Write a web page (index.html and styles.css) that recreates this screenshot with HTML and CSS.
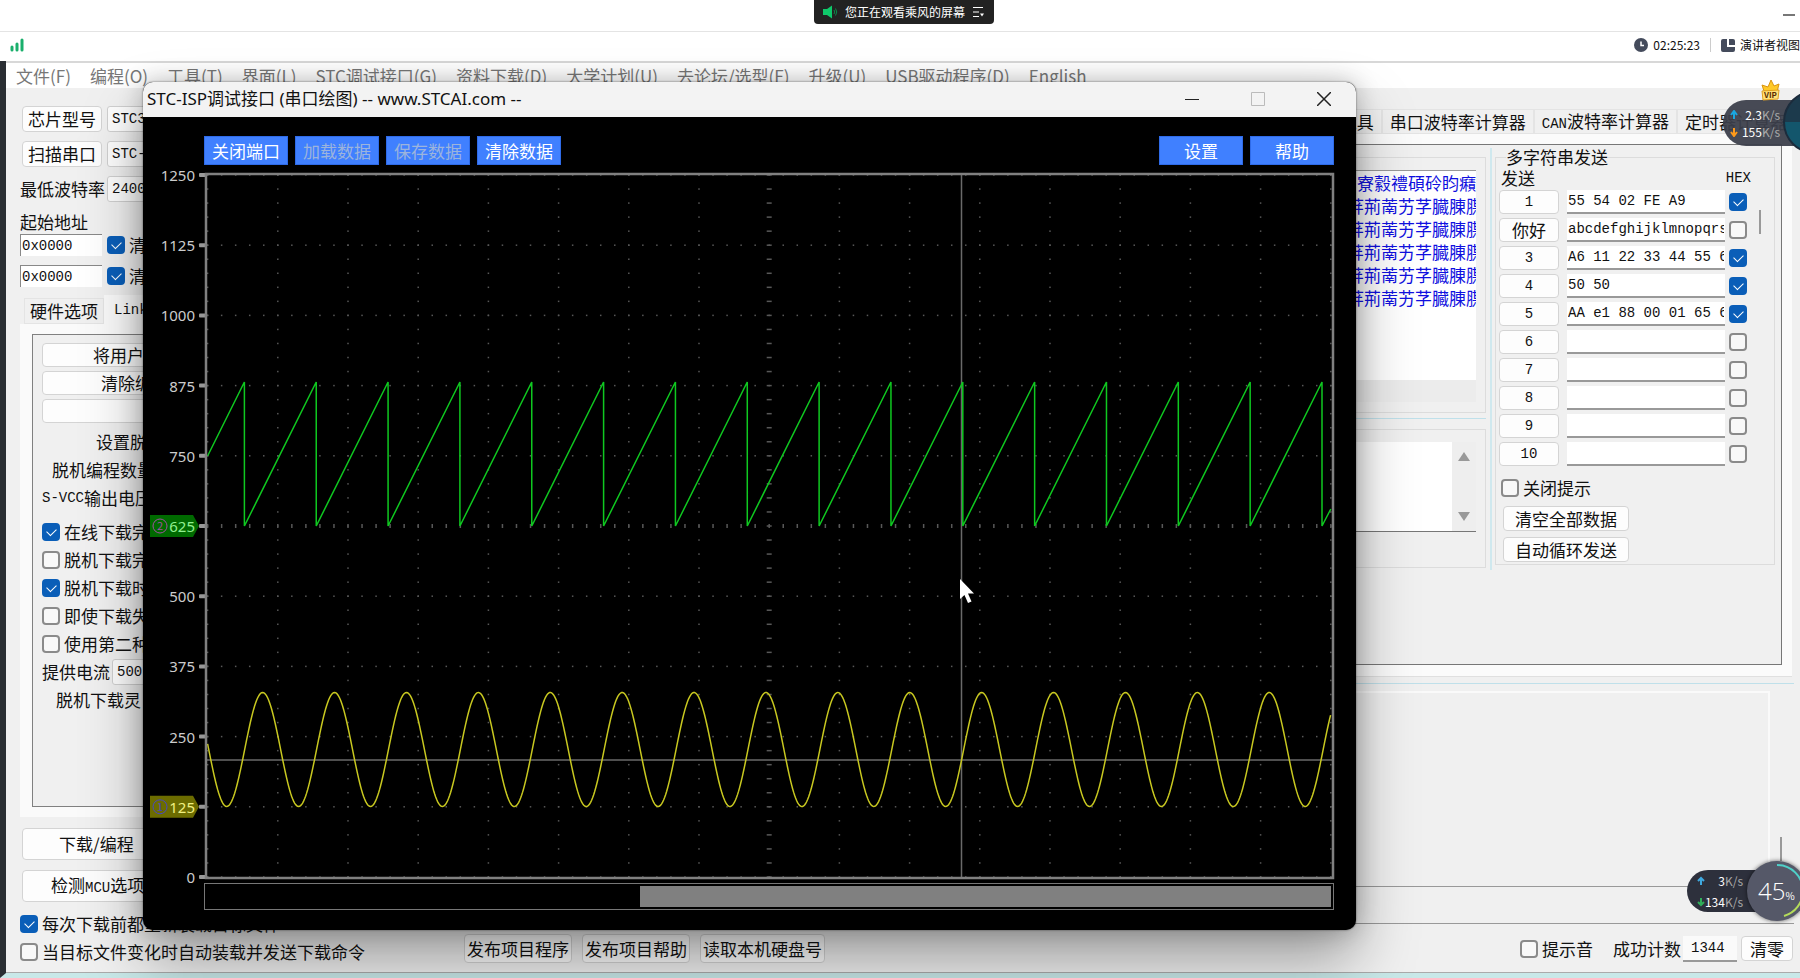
FILE: index.html
```
<!DOCTYPE html>
<html lang="zh-CN">

<head>
    <meta charset="utf-8">
    <title>STC-ISP</title>
    <link rel="stylesheet" href="styles.css">
</head>

<body>
    <header class="share-bar">
        <div class="share-pill">
            <svg width="16" height="14" viewBox="0 0 16 14">
                <path d="M1 4h4l5-3.500v13L5 10H1z" fill="#0fc86a" />
                <path d="M12 5q1.500 2 0 4M13.500 3.500q2.500 3.500 0 7" fill="none" stroke="#0a8a4a" />
            </svg>
            <span>您正在观看乘风的屏幕</span>
            <svg width="12" height="12" viewBox="0 0 12 12">
                <path d="M1 1.500h10M1 6h6M1 10.500h6" stroke="#fff" fill="none" />
                <path d="M8 7.500h4l-2 3z" fill="#fff" />
            </svg>
        </div>
        <button class="minimize" aria-label="最小化"></button>
    </header>

    <div class="meeting-bar">
        <svg width="14" height="14" viewBox="0 0 14 14">
            <path d="M2 9v3M7 6v6M12 2v10" stroke="#1aaf6c" stroke-width="3" stroke-linecap="round" />
        </svg>
        <div class="meeting-info">
            <svg width="14" height="14" viewBox="0 0 14 14">
                <circle cx="7" cy="7" r="7" fill="#444b5c" />
                <path d="M7 3.500V7.500H10" stroke="#fff" stroke-width="1.500" fill="none" />
            </svg>
            <span class="clock">02:25:23</span>
            <span class="divider"></span>
            <svg width="14" height="13" viewBox="0 0 14 13">
                <path d="M2 0h4v8h8v3a2 2 0 0 1-2 2H2a2 2 0 0 1-2-2V2a2 2 0 0 1 2-2z" fill="#444b5c" />
                <path d="M8 0h4a2 2 0 0 1 2 2v4H8z" fill="#444b5c" />
            </svg>
            <span>演讲者视图</span>
        </div>
    </div>

    <div class="stage">
        <nav class="menu">
            <a href="#">文件(F)</a>
            <a href="#">编程(O)</a>
            <a href="#">工具(T)</a>
            <a href="#">界面(L)</a>
            <a href="#">STC调试接口(G)</a>
            <a href="#">资料下载(D)</a>
            <a href="#">大学计划(U)</a>
            <a href="#">去论坛/选型(F)</a>
            <a href="#">升级(U)</a>
            <a href="#">USB驱动程序(D)</a>
            <a href="#">English</a>
        </nav>

        <div class="main">
            <section class="left">
                <div class="chip-row">
                    <button class="btn">芯片型号</button>
                    <select class="mono" aria-label="芯片型号"><option>STC32G</option></select>
                </div>
                <div class="chip-row">
                    <button class="btn">扫描串口</button>
                    <select class="mono" aria-label="扫描串口"><option>STC-USB</option></select>
                </div>
                <div class="chip-row">
                    <label for="baud">最低波特率</label>
                    <select class="mono" id="baud"><option>2400</option></select>
                </div>
                <div class="addr-title">起始地址</div>
                <div class="addr-row">
                    <input type="text" class="mono" value="0x0000" aria-label="起始地址 1">
                    <label><input type="checkbox" checked>清除</label>
                </div>
                <div class="addr-row">
                    <input type="text" class="mono" value="0x0000" aria-label="起始地址 2">
                    <label><input type="checkbox" checked>清除</label>
                </div>

                <div class="tabs left-tabs">
                    <button class="tab">硬件选项</button>
                    <button class="tab active mono">Link</button>
                </div>
                <div class="left-pane">
                    <div class="options">
                        <button class="btn wide to-user">将用户</button>
                        <button class="btn wide to-clear">清除编</button>
                        <button class="btn wide" aria-label="选项"></button>
                        <div class="opt in-54">设置脱</div>
                        <div class="opt in-10">脱机编程数量</div>
                        <div class="opt"><span class="mono">S-VCC</span>输出电压</div>
                        <div class="checks">
                            <label class="opt"><input type="checkbox" checked>在线下载完</label>
                            <label class="opt"><input type="checkbox">脱机下载完</label>
                            <label class="opt"><input type="checkbox" checked>脱机下载时</label>
                            <label class="opt"><input type="checkbox">即使下载失</label>
                            <label class="opt"><input type="checkbox">使用第二种</label>
                        </div>
                        <div class="opt">
                            <label for="current">提供电流</label>
                            <select class="mono" id="current"><option>500</option></select>
                        </div>
                        <div class="opt in-14">脱机下载灵</div>
                    </div>
                </div>

                <button class="btn big to-prog">下载/编程</button>
                <button class="btn big to-check">检测<span class="mono">MCU</span>选项</button>
                <label class="reload"><input type="checkbox" checked>每次下载前都重新装载目标文件</label>
            </section>

            <section class="right">
                <div class="tabs right-tabs">
                    <button class="tab">工具</button>
                    <button class="tab">串口波特率计算器</button>
                    <button class="tab"><span class="mono">CAN</span>波特率计算器</button>
                    <button class="tab">定时器计算器</button>
                </div>
                <div class="right-pane">
                    <div class="serial">
                        <div class="buffers">
                            <div class="group receive">
                                <div class="received">
                                    <div class="received-text">
                                        <p>寮縠禮碩砱盷癪</p>
                                        <p class="shift">荓荊萳艻芓臓腖腜</p>
                                        <p class="shift">荓荊萳艻芓臓腖腜</p>
                                        <p class="shift">荓荊萳艻芓臓腖腜</p>
                                        <p class="shift">荓荊萳艻芓臓腖腜</p>
                                        <p class="shift">荓荊萳艻芓臓腖腜</p>
                                    </div>
                                    <div class="hscroll"></div>
                                </div>
                            </div>
                            <div class="split-h"></div>
                            <div class="group send">
                                <div class="send-box">
                                    <textarea aria-label="发送缓冲区"></textarea>
                                    <div class="vscroll"><i class="up"></i><i class="down"></i></div>
                                </div>
                            </div>
                        </div>
                        <div class="split-v"></div>
                        <fieldset class="multi">
                            <legend>多字符串发送</legend>
                            <div class="multi-head"><span>发送</span><span class="mono">HEX</span></div>
                            <div class="multi-body">
                                <div class="multi-rows" id="rows"></div>
                                <div class="thumb"></div>
                            </div>
                            <label class="no-tip"><input type="checkbox">关闭提示</label>
                            <button class="btn act">清空全部数据</button>
                            <button class="btn act">自动循环发送</button>
                        </fieldset>
                    </div>
                </div>
                <div class="split-h low"></div>
                <div class="log"><div class="log-box"></div><div class="thumb"></div></div>
                <div class="progress"></div>
            </section>
        </div>

        <footer class="footer">
            <label class="auto-load"><input type="checkbox">当目标文件变化时自动装载并发送下载命令</label>
            <div class="footer-tools">
                <button class="btn">发布项目程序</button>
                <button class="btn">发布项目帮助</button>
                <button class="btn">读取本机硬盘号</button>
                <label class="beep"><input type="checkbox">提示音</label>
                <label for="count" class="count-label">成功计数</label>
                <input type="text" id="count" class="mono" value="1344">
                <button class="btn clear">清零</button>
            </div>
        </footer>
    </div>

    <div class="window">
        <div class="window-title">
            <span>STC-ISP调试接口 (串口绘图) -- www.STCAI.com --</span>
            <div class="window-buttons">
                <button aria-label="最小化"><svg width="14" height="14"><path d="M0 7.500h14" stroke="#222" /></svg></button>
                <button aria-label="最大化" disabled><svg width="14" height="14"><path d="M.5.500h13v13H.5z" stroke="#bbb" fill="none" /></svg></button>
                <button aria-label="关闭"><svg width="14" height="14"><path d="M0 0l14 14M14 0L0 14" stroke="#222" stroke-width="1.500" /></svg></button>
            </div>
        </div>
        <div class="toolbar">
            <button>关闭端口</button>
            <button disabled>加载数据</button>
            <button disabled>保存数据</button>
            <button>清除数据</button>
            <button class="push">设置</button>
            <button>帮助</button>
        </div>
        <svg class="plot" viewBox="0 0 1213 715">
            <g id="grid"></g>
            <g id="axis"></g>
            <path d="M818.500 10V712M64 595H1190" stroke="#6a6a6a" stroke-width="1.500" />
            <polyline id="saw" fill="none" stroke="#0fc820" stroke-width="1.500" />
            <polyline id="sine" fill="none" stroke="#c8c820" stroke-width="1.500" />
            <rect x="63" y="9" width="1127" height="704" fill="none" stroke="#808080" stroke-width="2.500" />
            <path d="M817 414v20l4.500-4 3.500 8 3.500-1.500-3.500-8h6z" fill="#fff" />
        </svg>
        <div class="plot-scroll"><div class="plot-thumb"></div></div>
    </div>

    <div class="net net-top">
        <div class="net-lines">
            <span><svg width="8" height="10"><path d="M4 9V2M1 5l3-4 3 4" stroke="#1aa7e0" stroke-width="2" fill="none" /></svg>2.3<em>K/s</em></span>
            <span><svg width="8" height="10"><path d="M4 1v7M1 5l3 4 3-4" stroke="#ff9a1a" stroke-width="2" fill="none" /></svg>155<em>K/s</em></span>
        </div>
        <div class="ball"></div>
        <svg class="vip" width="22" height="22" viewBox="0 0 22 22">
            <path d="M4 12L2 6l6 2 3-7 3 6 5-2-2 8z" fill="#ffc928" stroke="#d99412" />
            <path d="M2 12l17-1-1 9-15 1z" fill="#ffe27a" stroke="#e0a020" />
            <text x="4" y="19" font-size="8" font-weight="700" fill="#5a2a00">VIP</text>
        </svg>
    </div>

    <div class="net net-bottom">
        <div class="net-lines">
            <span><svg width="8" height="10"><path d="M4 9V2M1 5l3-3 3 3" stroke="#3fa9e0" stroke-width="2" fill="none" /></svg>3<em>K/s</em></span>
            <span><svg width="8" height="10"><path d="M4 1v7M1 5l3 3 3-3" stroke="#2fae5a" stroke-width="2" fill="none" /></svg>134<em>K/s</em></span>
        </div>
        <div class="ball">
            <svg width="60" height="60" viewBox="0 0 60 60">
                <path d="M30 4a26 26 0 0 1 26 26" stroke="#4fd0c8" stroke-width="2" fill="none" />
                <path d="M56 30a26 26 0 0 1-19 25" stroke="#b4dc5a" stroke-width="2" fill="none" />
            </svg>
            <b>45</b><small>%</small>
        </div>
    </div>

    <script>
        // multi string rows
        const strings = [
            ["1", "55 54 02 FE A9", true],
            ["你好", "abcdefghijklmnopqrst", false],
            ["3", "A6 11 22 33 44 55 66", true],
            ["4", "50 50", true],
            ["5", "AA e1 88 00 01 65 66", true],
            ["6", "", false],
            ["7", "", false],
            ["8", "", false],
            ["9", "", false],
            ["10", "", false]
        ]

        document.querySelector("#rows").innerHTML = strings.map(([name, text, hex], i) => `
            <div class="multi-row">
                <button class="btn ${name == "你好" ? "" : "mono"}">${name}</button>
                <input type="text" class="mono" value="${text}" aria-label="字符串 ${i + 1}">
                <input type="checkbox" aria-label="HEX ${i + 1}" ${hex ? "checked" : ""}>
            </div>`).join("")

        // plot
        const left = 64.6
        const top0 = 10
        const step = 70.2
        const small = step / 5
        const right = left + step * 16

        let dots = ""
        for (let r = 0; r <= 10; r++) {
            const y = top0 + r * step
            for (let i = 0; i <= 80; i++) {
                const h = r == 5 ? 4 : 1.5
                dots += `<rect x="${left + i * small - .75}" y="${y - h / 2}" width="1.5" height="${h}"/>`
            }
        }
        for (let c = 0; c <= 16; c++) {
            const x = left + c * step
            for (let i = 0; i <= 50; i++) {
                const w = c == 8 ? 5 : 1.5
                dots += `<rect x="${x - w / 2}" y="${top0 + i * small - .75}" width="${w}" height="1.5"/>`
            }
        }
        document.querySelector("#grid").innerHTML = dots

        const marks = {
            625: ["2", "#006a00", "#90f090", "#a050a0"],
            125: ["1", "#6c6c00", "#f0f080", "#4848c0"]
        }
        let axis = ""
        for (let r = 0; r <= 10; r++) {
            const y = top0 + r * step
            const value = 1250 - r * 125
            const mark = marks[value]
            if (mark) {
                axis += `<path d="M7 ${y - 11}h43l6 11-6 11H7z" fill="${mark[1]}"/>
                    <circle cx="17" cy="${y}" r="7" fill="none" stroke="${mark[3]}"/>
                    <text class="num" x="17" y="${y + 4}" fill="${mark[3]}">${mark[0]}</text>`
            }
            axis += `<rect x="56" y="${y - 2}" width="7" height="4" rx="1" fill="#999"/>
                <text class="tick" x="52" y="${y + 6}" fill="${mark ? mark[2] : "#ccc"}">${value}</text>`
        }
        document.querySelector("#axis").innerHTML = axis

        const saw = [[left, 291]]
        for (let x = 101.4; x < right; x += 71.84) {
            saw.push([x, 217], [x, 361])
        }
        saw.push([right, 344])
        document.querySelector("#saw").setAttribute("points", saw.join(" "))

        const sine = []
        for (let x = left; x <= right; x += 1) {
            sine.push([x, 584.5 + 57 * Math.cos((x - 83.700) / 71.9 * 2 * Math.PI)])
        }
        document.querySelector("#sine").setAttribute("points", sine.join(" "))
    </script>
</body>

</html>
```
FILE: styles.css
```
* {
    box-sizing: border-box;
}

body {
    margin: 0;
    min-height: 100vh;
    display: flex;
    flex-direction: column;
    position: relative;
    overflow: hidden;
    background: white;
    color: #111;
    font-family: "Noto Sans CJK SC", "Noto Sans", sans-serif;
    font-size: 17px;
    line-height: 22px;
    white-space: nowrap;
}

button,
input,
select,
textarea {
    font: inherit;
    color: inherit;
    margin: 0;
}

p {
    margin: 0;
}

.mono {
    font-family: "Liberation Mono", "Noto Sans CJK SC", monospace;
    font-size: 14px;
}

/* meeting bars */

.share-bar {
    height: 31px;
    display: flex;
    justify-content: center;
    align-items: flex-start;
    position: relative;
    padding-left: 8px;
}

.share-pill {
    display: flex;
    align-items: center;
    gap: 7px;
    height: 24px;
    padding: 0 10px 0 8px;
    background: #222;
    color: white;
    font-size: 12px;
    border-radius: 0 0 4px 4px;
}

.minimize {
    position: absolute;
    right: 5px;
    top: 14px;
    width: 12px;
    height: 2px;
    padding: 0;
    border: 0 none;
    background: #777;
}

.meeting-bar {
    height: 30px;
    display: flex;
    align-items: center;
    justify-content: space-between;
    padding: 0 0 3px 10px;
    border-top: 1px solid #e4e4e4;
    font-size: 12px;
    overflow: hidden;
}

.meeting-info {
    display: flex;
    align-items: center;
    gap: 5px;
}

.divider {
    height: 14px;
    margin: 0 5px;
    border-left: 1px solid #ccc;
}

/* programmer */

.stage {
    flex: 1;
    display: flex;
    flex-direction: column;
    border-left: 6px solid #2a2e33;
    border-bottom: 5px solid #c8e8e8;
    background: #f0f0f0;
}

.menu {
    display: flex;
    gap: 19px;
    height: 27px;
    padding-left: 10px;
    border-top: 2px solid #d8d8d8;
    background: white;
}

.menu a {
    color: #777;
    text-decoration: none;
    line-height: 25px;
}

.main {
    flex: 1;
    display: flex;
}

.left {
    width: 300px;
    flex-shrink: 0;
    padding: 17px 0 0 14px;
    display: flex;
    flex-direction: column;
}

.btn {
    height: 26px;
    padding: 0;
    border: 1px solid #d4d4d4;
    border-radius: 4px;
    background: #fdfdfd;
    line-height: 22px;
}

select {
    appearance: none;
    height: 26px;
    width: 160px;
    padding: 0 4px;
    border: 1px solid #d0d0d0;
    border-radius: 3px;
    background: #fdfdfd;
}

.chip-row {
    display: flex;
    align-items: center;
    gap: 5px;
    height: 27px;
    margin-bottom: 8px;
}

.chip-row .btn {
    width: 80px;
    margin-left: 2px;
}

.chip-row label {
    width: 82px;
}

.addr-title {
    height: 24px;
    line-height: 24px;
}

.addr-row {
    display: flex;
    align-items: center;
    gap: 5px;
    height: 22px;
    margin-bottom: 9px;
}

input[type="text"] {
    min-width: 0;
    height: 23px;
    padding: 0 1px;
    border: 0 none;
    border-bottom: 2px solid #999;
    background: white;
}

.addr-row input[type="text"] {
    width: 82px;
    height: 22px;
    border: 0 none;
    border-top: 1px solid #888;
    border-left: 1px solid #888;
}

label {
    display: flex;
    align-items: center;
    gap: 4px;
}

input[type="checkbox"] {
    appearance: none;
    flex-shrink: 0;
    width: 18px;
    height: 18px;
    border: 2px solid #8a8a8a;
    border-radius: 4px;
    background: #f8f8f8;
}

input[type="checkbox"]:checked {
    border-color: #0a5eb8;
    background: #0a5eb8;
}

input[type="checkbox"]:checked::before {
    content: "";
    display: block;
    width: 8px;
    height: 5px;
    margin: 3px;
    border-left: 1px solid white;
    border-bottom: 1px solid white;
    transform: rotate(-45deg);
}

.tabs {
    display: flex;
}

.tab {
    padding: 0 7px;
    border: 1px solid #e4e4e4;
    background: #f0f0f0;
}

.left-tabs {
    height: 28px;
    padding-left: 4px;
    align-items: flex-end;
}

.left-tabs .tab {
    width: 80px;
    height: 26px;
    padding: 0;
}

.left-tabs .tab.active {
    height: 29px;
    padding: 0 10px;
    text-align: left;
    border: 0 none;
    background: #fafafa;
}

.left-pane {
    flex: 1;
    display: flex;
    padding: 10px 12px;
    margin-bottom: 11px;
    background: #fafafa;
}

.options {
    flex: 1;
    border: 1px solid #808080;
    padding: 8px 9px;
    background: #f0f0f0;
}

.wide {
    display: block;
    width: 100%;
    height: 24px;
    margin-bottom: 4px;
    text-align: left;
}

.to-user {
    padding-left: 50px;
}

.to-clear {
    padding-left: 58px;
}

.opt {
    display: flex;
    align-items: center;
    height: 24px;
    margin-bottom: 4px;
}

.options .wide + .opt {
    margin-top: 7px;
}

.checks {
    margin-top: 10px;
}

.opt select {
    margin-left: 2px;
}

.in-54 {
    padding-left: 54px;
}

.in-10 {
    padding-left: 10px;
}

.in-14 {
    padding-left: 14px;
}

.big {
    height: 32px;
    margin: 0 0 10px 2px;
    text-align: left;
}

.to-prog {
    padding-left: 36px;
}

.to-check {
    padding-left: 28px;
}

.reload {
    height: 24px;
}

.right {
    flex: 1;
    min-width: 0;
    padding-top: 21px;
    display: flex;
    flex-direction: column;
}

.right-tabs {
    justify-content: flex-end;
    height: 25px;
    padding-right: 5px;
}

.right-pane {
    flex: 1;
    display: flex;
    margin-right: 8px;
    padding: 10px 10px 11px 0;
    background: #fbfbfb;
    border-bottom: 1px solid #e0e0e0;
}

.serial {
    flex: 1;
    display: flex;
    align-items: flex-start;
    padding: 1px 6px 0 0;
    border: 1px solid #777;
    background: #f0f0f0;
}

.buffers {
    flex: 1;
    padding-top: 11px;
}

.group {
    border: 1px solid #dcdcdc;
    padding: 12px 9px 10px;
}

.received {
    border-top: 1px solid #999;
    background: white;
    overflow: hidden;
}

.received-text {
    height: 209px;
    display: flex;
    flex-direction: column;
    align-items: flex-end;
    color: #1010e0;
    line-height: 23px;
}

.received-text .shift {
    margin-right: -7px;
}

.hscroll {
    height: 22px;
    background: #ececec;
}

.split-h {
    height: 1px;
    margin: 5px 0 10px;
    background: #bfe0ea;
}

.send-box {
    display: flex;
    height: 90px;
    border-bottom: 1px solid #777;
}

.group.send {
    padding-bottom: 35px;
}

textarea {
    flex: 1;
    border: 0 none;
    resize: none;
    background: white;
}

.vscroll {
    width: 24px;
    display: flex;
    flex-direction: column;
    align-items: center;
    justify-content: space-between;
    padding: 10px 0;
    background: #eee;
}

.up,
.down {
    border: 6px solid transparent;
}

.up {
    border-top-width: 0;
    border-bottom: 9px solid #999;
}

.down {
    border-bottom-width: 0;
    border-top: 9px solid #999;
}

.split-v {
    width: 2px;
    height: 422px;
    margin: 2px 3px 0 4px;
    background: #cfe8ee;
}

.multi {
    width: 280px;
    margin: 0;
    padding: 0 3px 2px;
    border: 1px solid #dcdcdc;
}

.multi legend {
    padding: 0;
    margin-left: 7px;
}

.multi-head {
    display: flex;
    justify-content: space-between;
    height: 20px;
    line-height: 20px;
    padding: 0 20px 0 2px;
}

.multi-body {
    display: flex;
    gap: 12px;
}

.multi-row {
    display: flex;
    align-items: center;
    height: 28px;
}

.multi-row .btn {
    width: 60px;
    height: 24px;
}

.multi-row input[type="text"] {
    width: 158px;
    height: 24px;
    margin: 0 4px 0 8px;
}

.thumb {
    width: 2px;
    height: 24px;
    background: #999;
}

.multi-body .thumb {
    margin-top: 22px;
}

.no-tip {
    height: 32px;
    padding: 8px 0 0 2px;
}

.act {
    display: block;
    width: 126px;
    height: 25px;
    margin: 6px 0 0 4px;
}

.split-h.low {
    margin: 6px 6px 7px 0;
}

.log {
    display: flex;
    align-items: flex-end;
    gap: 10px;
    height: 196px;
    margin-right: 18px;
    border-bottom: 1px solid #999;
}

.log-box {
    flex: 1;
    align-self: stretch;
    border: 2px solid #fafafa;
    border-bottom: 0 none;
}

.log .thumb {
    margin-bottom: 25px;
}

.progress {
    height: 37px;
    margin: 0 6px 12px 0;
    border-bottom: 1px solid #999;
}

.footer {
    display: flex;
    height: 37px;
    padding: 0 7px 5px 14px;
    border-bottom: 1px solid #aaa;
}

.footer-tools {
    flex: 1;
    display: flex;
    align-items: center;
    margin-bottom: 6px;
}

.footer .btn {
    height: 29px;
    padding: 0 2px;
    margin-right: 10px;
}

.auto-load {
    width: 444px;
}

.beep {
    margin-left: auto;
}

.count-label {
    margin: 0 2px 0 20px;
}

#count {
    width: 54px;
    height: 26px;
    padding: 0 8px;
    margin-right: 4px;
    background: #fafafa;
}

.footer .btn.clear {
    width: 52px;
    height: 25px;
    margin: 0;
}

/* plot window */

.window {
    position: absolute;
    left: 143px;
    right: 444px;
    top: 82px;
    overflow: hidden;
    padding-bottom: 20px;
    border-radius: 10px;
    background: black;
    box-shadow: 0 32px 60px rgba(0, 0, 0, .34), 0 0 24px rgba(0, 0, 0, .24), 0 0 2px rgba(0, 0, 0, .6);
}

.window-title {
    display: flex;
    justify-content: space-between;
    align-items: center;
    height: 35px;
    padding: 0 25px 2px 4px;
    background: #f3f3f3;
    font-family: "Noto Sans", "Noto Sans CJK SC", sans-serif;
}

.window-buttons {
    display: flex;
    gap: 52px;
}

.window-buttons button {
    display: flex;
    padding: 0;
    border: 0 none;
    background: transparent;
}

.toolbar {
    display: flex;
    gap: 7px;
    padding: 19px 22px 0 61px;
}

.toolbar button {
    width: 84px;
    height: 29px;
    padding: 0;
    border: 1px solid #2f6be8;
    background: #4080ff;
    color: white;
}

.toolbar button:disabled {
    color: #9cb4dc;
}

.toolbar .push {
    margin-left: auto;
}

.plot {
    display: block;
    width: 100%;
    overflow: visible;
}

#grid {
    fill: #585858;
}

.tick {
    font-family: "Noto Sans", sans-serif;
    font-size: 15px;
    text-anchor: end;
}

.num {
    font-size: 11px;
    text-anchor: middle;
}

.plot-scroll {
    height: 27px;
    margin: 3px 22px 0 61px;
    padding: 2px;
    border: 1px solid #777;
}

.plot-thumb {
    width: 61.5%;
    height: 100%;
    margin-left: auto;
    background: #808080;
}

/* network speed balls */

.net {
    position: absolute;
    right: 0;
    display: flex;
    color: white;
    font-size: 12px;
}

.net-lines {
    display: flex;
    flex-direction: column;
    justify-content: center;
    border-radius: 24px 0 0 24px;
    background: rgba(60, 63, 74, .94);
}

.net-lines span {
    display: flex;
    align-items: center;
    justify-content: flex-end;
}

.net-lines svg {
    margin-right: auto;
}

.net-lines em {
    font-style: normal;
    color: #aaa;
}

.net-top {
    top: 100px;
    width: 77px;
    height: 46px;
}

.net-top .net-lines {
    width: 77px;
    padding: 0 20px 0 7px;
    line-height: 17px;
}

.net-top .ball {
    position: absolute;
    left: 60px;
    top: -10px;
    width: 64px;
    height: 64px;
    border: 2px solid #1c2c3c;
    border-radius: 50%;
    background: linear-gradient(#1c3a4c 50%, #13566c 50%);
}

.vip {
    position: absolute;
    left: 37px;
    top: -21px;
}

.net-bottom {
    bottom: 66px;
    width: 113px;
    height: 42px;
}

.net-bottom .net-lines {
    width: 76px;
    padding: 0 20px 0 10px;
    line-height: 21px;
    background: #2d303c;
}

.net-bottom .ball {
    position: absolute;
    left: 60px;
    top: -9px;
    width: 60px;
    height: 60px;
    display: flex;
    align-items: center;
    padding-left: 11px;
    border-radius: 50%;
    background: #555868;
    box-shadow: 0 0 4px rgba(0, 0, 0, .6);
}

.ball svg {
    position: absolute;
    left: 0;
    top: 0;
}

.ball b {
    font-family: "Open Sans", sans-serif;
    font-size: 24px;
    font-weight: 300;
}

.ball small {
    padding-top: 10px;
    font-size: 10px;
}
```
